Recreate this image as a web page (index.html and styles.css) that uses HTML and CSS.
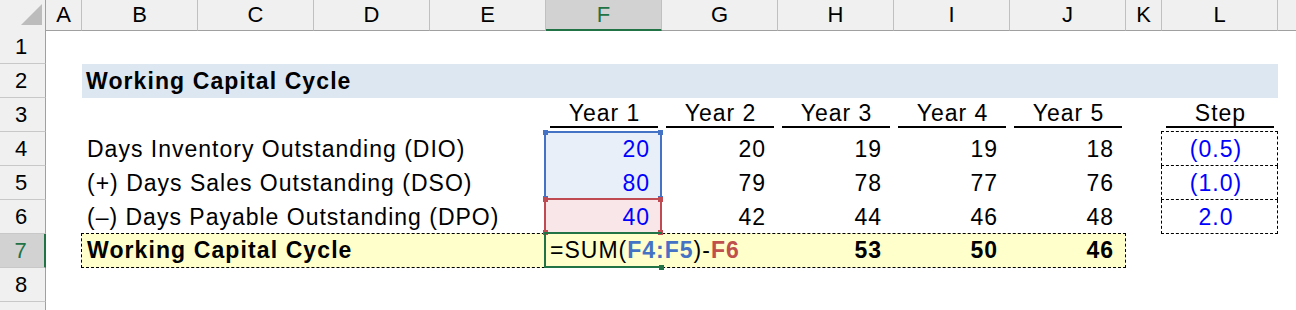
FILE: index.html
```html
<!DOCTYPE html>
<html>
<head>
<meta charset="utf-8">
<link rel="stylesheet" href="styles.css">
</head>
<body>
<div class="sheet">
  <div class="row hdr">
    <div class="corner"><svg width="46" height="30" viewBox="0 0 46 30"><polygon points="42,4 42,25 21,25" fill="#bcbcbc"/></svg></div>
    <div class="ch">A</div>
    <div class="ch">B</div>
    <div class="ch">C</div>
    <div class="ch">D</div>
    <div class="ch">E</div>
    <div class="ch sel">F</div>
    <div class="ch">G</div>
    <div class="ch">H</div>
    <div class="ch">I</div>
    <div class="ch">J</div>
    <div class="ch">K</div>
    <div class="ch">L</div>
    <div class="ch end"></div>
  </div>

  <div class="row"><div class="rh">1</div></div>

  <div class="row">
    <div class="rh">2</div>
    <div class="cell title">Working Capital Cycle</div>
  </div>

  <div class="row">
    <div class="rh">3</div>
    <div class="yr c-f"><span>Year 1</span></div>
    <div class="yr c-g"><span>Year 2</span></div>
    <div class="yr c-h"><span>Year 3</span></div>
    <div class="yr c-i"><span>Year 4</span></div>
    <div class="yr c-j"><span>Year 5</span></div>
    <div class="yr c-l"><span>Step</span></div>
  </div>

  <div class="row">
    <div class="rh">4</div>
    <div class="cell label">Days Inventory Outstanding (DIO)</div>
    <div class="cell num c-f fill-blue blue">20</div>
    <div class="cell num c-g">20</div>
    <div class="cell num c-h">19</div>
    <div class="cell num c-i">19</div>
    <div class="cell num c-j">18</div>
    <div class="cell step first c-l">(0.5)</div>
  </div>

  <div class="row">
    <div class="rh">5</div>
    <div class="cell label">(+) Days Sales Outstanding (DSO)</div>
    <div class="cell num c-f fill-blue blue">80</div>
    <div class="cell num c-g">79</div>
    <div class="cell num c-h">78</div>
    <div class="cell num c-i">77</div>
    <div class="cell num c-j">76</div>
    <div class="cell step c-l">(1.0)</div>
  </div>

  <div class="row">
    <div class="rh">6</div>
    <div class="cell label">(–) Days Payable Outstanding (DPO)</div>
    <div class="cell num c-f fill-red blue">40</div>
    <div class="cell num c-g">42</div>
    <div class="cell num c-h">44</div>
    <div class="cell num c-i">46</div>
    <div class="cell num c-j">48</div>
    <div class="cell step c-l">2.0</div>
  </div>

  <div class="row">
    <div class="rh sel">7</div>
    <div class="band">
      <div class="cell blabel">Working Capital Cycle</div>
      <div class="cell fx">=SUM(<b class="ref-blue">F4:F5</b>)-<b class="ref-red">F6</b></div>
      <div class="cell num bold">53</div>
      <div class="cell num bold">50</div>
      <div class="cell num bold last">46</div>
    </div>
  </div>

  <div class="row"><div class="rh">8</div></div>
  <div class="row"><div class="rh"></div></div>

  <div class="hl hl-blue"><i class="hd tl"></i><i class="hd tr"></i><i class="hd bl"></i><i class="hd br"></i></div>
  <div class="hl hl-red"><i class="hd tl"></i><i class="hd tr"></i><i class="hd bl"></i><i class="hd br"></i></div>
  <div class="hl hl-act"><i class="hd act-br"></i></div>
</div>
</body>
</html>
```

FILE: styles.css
```css
* {
  box-sizing: border-box;
  margin: 0;
  padding: 0;
}

body {
  margin: 0;
  background: #ffffff;
  overflow: hidden;
}

.sheet {
  position: relative;
  width: 1296px;
  height: 310px;
  overflow: hidden;
  font-family: "Liberation Sans", Arial, sans-serif;
  font-size: 23px;
  letter-spacing: 1px;
  color: #000000;
}

.row {
  display: grid;
  grid-template-columns: 46px 36px repeat(9, 116px) 36px 116px 1fr;
  height: 34px;
}

.row.hdr {
  height: 30px;
}

.corner {
  background: #f0f0f0;
  border-right: 1px solid #a0a0a0;
  border-bottom: 1px solid #a0a0a0;
}

.corner svg {
  display: block;
}

.ch {
  background: #f0f0f0;
  border-right: 1px solid #c0c0c0;
  border-bottom: 1px solid #a0a0a0;
  text-align: center;
  padding-top: 3px;
  line-height: 24px;
  padding-left: 1px;
  font-size: 22px;
}

.ch.sel {
  background: #d2d2d2;
  color: #217346;
  border-bottom: 2px solid #217346;
}

.ch.end {
  border-right: none;
}

.rh {
  grid-column: 1;
  background: #f0f0f0;
  border-right: 1px solid #a0a0a0;
  border-bottom: 1px solid #c8c8c8;
  text-align: center;
  padding-top: 5px;
  padding-right: 2px;
  line-height: 24px;
  font-size: 22px;
}

.rh.sel {
  background: #d2d2d2;
  color: #217346;
  border-right: 2px solid #217346;
}

.cell {
  padding-top: 5px;
  line-height: 24px;
  white-space: nowrap;
}

.c-f { grid-column: 7; }
.c-g { grid-column: 8; }
.c-h { grid-column: 9; }
.c-i { grid-column: 10; }
.c-j { grid-column: 11; }
.c-l { grid-column: 13; }

.title {
  grid-column: 3 / 14;
  background: #dde7f2;
  font-weight: bold;
  letter-spacing: 1.1px;
  padding-left: 4px;
}

.label {
  grid-column: 3 / 7;
  padding-left: 5px;
}

.num {
  text-align: right;
  padding-right: 12px;
}

.blue {
  color: #0000ff;
}

.fill-blue {
  background: #e9eff8;
}

.fill-red {
  background: #f9e6e8;
}

.yr {
  display: flex;
  flex-direction: column;
  justify-content: flex-end;
  padding: 0 4px 4px 4px;
}

.yr span {
  display: block;
  text-align: center;
  line-height: 25px;
  border-bottom: 2px solid #000000;
  padding-left: 1px;
}

.step {
  text-align: center;
  padding-right: 7px;
  color: #0000ff;
  margin-left: -1px;
  border-left: 1px dashed #000000;
  border-right: 1px dashed #000000;
  border-bottom: 1px dashed #000000;
}

.step.first {
  margin-top: -1px;
  border-top: 1px dashed #000000;
}

.band {
  grid-column: 3 / 12;
  margin: -1px 0 0 -1px;
  border: 1px dashed #000000;
  background: #ffffcc;
  display: grid;
  grid-template-columns: 464px 232px 116px 116px 1fr;
}

.band .cell {
  padding-top: 4px;
}

.blabel {
  font-weight: bold;
  letter-spacing: 1.1px;
  padding-left: 5px;
}

.fx {
  padding-left: 4px;
  position: relative;
  z-index: 1;
}

.ref-blue {
  color: #4472c4;
}

.ref-red {
  color: #c0504d;
}

.bold {
  font-weight: bold;
}

.num.last {
  padding-right: 11px;
}

.hl {
  position: absolute;
  pointer-events: none;
  z-index: 2;
}

.hl-blue {
  left: 544px;
  top: 131px;
  width: 118px;
  height: 69px;
  border: 2px solid #4472c4;
  color: #4472c4;
}

.hl-red {
  left: 544px;
  top: 198px;
  width: 118px;
  height: 36px;
  border: 2px solid #bf4a52;
  color: #bf4a52;
}

.hl-act {
  left: 544px;
  top: 232px;
  width: 118px;
  height: 36px;
  border: 2px solid #217346;
  border-right: none;
  color: #217346;
}

.hd {
  position: absolute;
  width: 5px;
  height: 5px;
  background: currentColor;
}

.hd.tl { left: -3px; top: -3px; }
.hd.tr { right: -3px; top: -3px; }
.hd.bl { left: -3px; bottom: -3px; }
.hd.br { right: -3px; bottom: -3px; }
.hd.act-br { right: -2px; bottom: -4px; }
```
